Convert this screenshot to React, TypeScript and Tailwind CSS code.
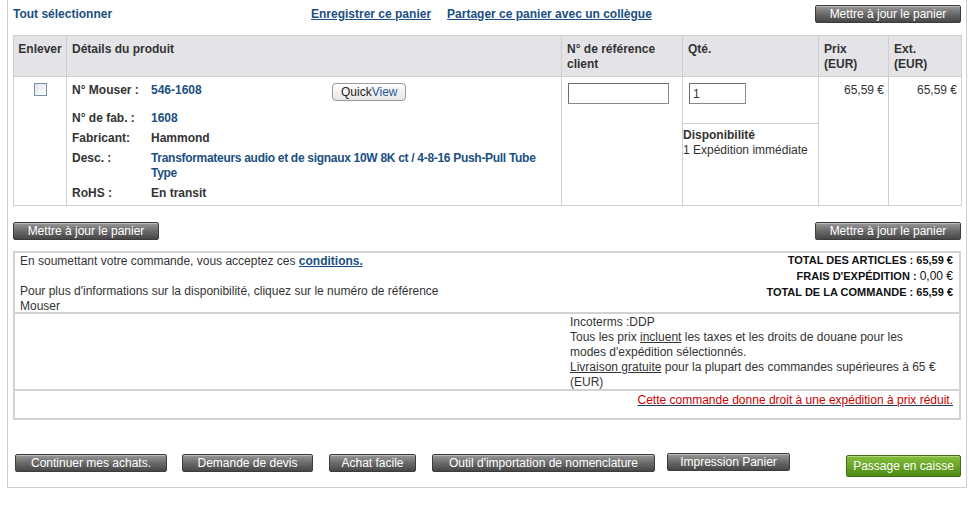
import React from 'react';

const blue = 'text-[#1b4f82]';

const GrayButton: React.FC<{ label: string; w: string; className?: string }> = ({ label, w, className = '' }) => (
    <button
        className={`${w} ${className} h-[18px] rounded-[2px] border border-[#3c3c3c] bg-gradient-to-b from-[#9a9a9a] via-[#6a6a6a] to-[#474747] text-[12px] leading-[16px] text-white shadow-[inset_0_1px_0_rgba(255,255,255,0.35)]`}
    >
        {label}
    </button>
);

const DetailRow: React.FC<{ label: string; h: string; children: React.ReactNode }> = ({ label, h, children }) => (
    <div className={`flex ${h}`}>
        <div className="w-[79px] shrink-0 font-bold text-[#333]">{label}</div>
        <div className="flex-1">{children}</div>
    </div>
);

export default function App() {
    return (
        <div className="w-[969px] h-[505px] bg-white font-['Liberation_Sans',Arial,sans-serif] text-[12px] leading-[15px] text-[#333]">
            <div className="ml-[7px] w-[960px] h-[488px] border-x border-b border-[#cfcfcf] px-[5px] pt-[5px]">
                {/* top links */}
                <div className="flex items-center h-[18px]">
                    <a className={`w-[298px] font-bold ${blue}`}>Tout sélectionner</a>
                    <a className={`font-bold underline ${blue}`}>Enregistrer ce panier</a>
                    <a className={`ml-[16px] font-bold underline ${blue}`}>Partager ce panier avec un collègue</a>
                    <GrayButton label="Mettre à jour le panier" w="w-[146px]" className="ml-auto" />
                </div>

                {/* cart table */}
                <table className="mt-[12px] w-[948px] table-fixed border-collapse">
                    <colgroup>
                        <col className="w-[53px]" />
                        <col className="w-[495px]" />
                        <col className="w-[121px]" />
                        <col className="w-[136px]" />
                        <col className="w-[70px]" />
                        <col className="w-[73px]" />
                    </colgroup>
                    <thead>
                        <tr className="h-[41px] bg-[#e4e4e8] text-left align-top font-bold">
                            <th className="border border-[#cfcfcf] px-[4px] pt-[6px] text-center">Enlever</th>
                            <th className="border border-[#cfcfcf] px-[5px] pt-[6px]">Détails du produit</th>
                            <th className="border border-[#cfcfcf] px-[5px] pt-[6px]">N° de référence<br />client</th>
                            <th className="border border-[#cfcfcf] px-[5px] pt-[6px]">Qté.</th>
                            <th className="border border-[#cfcfcf] px-[5px] pt-[6px]">Prix<br />(EUR)</th>
                            <th className="border border-[#cfcfcf] px-[5px] pt-[6px]">Ext.<br />(EUR)</th>
                        </tr>
                    </thead>
                    <tbody>
                        <tr className="h-[129px] align-top">
                            <td className="border border-[#cfcfcf] pt-[6px]">
                                <div className="mx-auto h-[13px] w-[13px] border border-[#7a8ea6] bg-gradient-to-br from-[#dfe4ea] to-white" />
                            </td>
                            <td className="border border-[#cfcfcf] pl-[5px] pr-[2px] pt-[6px]">
                                <DetailRow label="N° Mouser :" h="h-[28px]">
                                    <div className="flex">
                                        <a className={`w-[181px] font-bold ${blue}`}>546-1608</a>
                                        <span className="h-[18px] rounded-[4px] border border-[#9a9a9a] bg-gradient-to-b from-white to-[#e6e6e6] px-[8px] text-[12px] leading-[16px] text-[#222]">
                                            Quick<span className="text-[#1b5a9a]">View</span>
                                        </span>
                                    </div>
                                </DetailRow>
                                <DetailRow label="N° de fab. :" h="h-[20px]">
                                    <a className={`font-bold ${blue}`}>1608</a>
                                </DetailRow>
                                <DetailRow label="Fabricant:" h="h-[20px]">
                                    <span className="font-bold">Hammond</span>
                                </DetailRow>
                                <DetailRow label="Desc. :" h="h-[35px]">
                                    <a className={`block whitespace-nowrap tracking-[-0.3px] font-bold ${blue}`}>
                                        Transformateurs audio et de signaux 10W 8K ct / 4-8-16 Push-Pull Tube
                                        <br />
                                        Type
                                    </a>
                                </DetailRow>
                                <DetailRow label="RoHS :" h="h-[15px]">
                                    <span className="font-bold">En transit</span>
                                </DetailRow>
                            </td>
                            <td className="border border-[#cfcfcf] px-[6px] pt-[6px]">
                                <input className="h-[21px] w-[101px] border border-[#8a8a8a] border-t-[#6e6e6e] border-l-[#6e6e6e] bg-white outline-none" />
                            </td>
                            <td className="border border-[#cfcfcf] p-0">
                                <div className="h-[46px] px-[6px] pt-[6px]">
                                    <input defaultValue="1" className="h-[21px] w-[57px] border border-[#8a8a8a] border-t-[#6e6e6e] border-l-[#6e6e6e] bg-white px-[3px] text-[12px] outline-none" />
                                </div>
                                <div className="h-[82px] border-t border-[#cfcfcf] pt-[4px]">
                                    <div className="font-bold">Disponibilité</div>
                                    <div>1 Expédition immédiate</div>
                                </div>
                            </td>
                            <td className="border border-[#cfcfcf] pr-[4px] pt-[6px] text-right">65,59 €</td>
                            <td className="border border-[#cfcfcf] pr-[4px] pt-[6px] text-right">65,59 €</td>
                        </tr>
                    </tbody>
                </table>

                {/* update buttons */}
                <div className="mt-[16px] flex justify-between">
                    <GrayButton label="Mettre à jour le panier" w="w-[146px]" />
                    <GrayButton label="Mettre à jour le panier" w="w-[146px]" />
                </div>

                {/* summary */}
                <div className="mt-[11px] w-[948px] border-2 border-[#d2d2d2]">
                    <div className="flex h-[61px] border-b-2 border-[#d2d2d2] pl-[5px] pr-[6px] pt-[1px]">
                        <div className="flex-1">
                            <div>
                                En soumettant votre commande, vous acceptez ces{' '}
                                <a className={`font-bold underline ${blue}`}>conditions.</a>
                            </div>
                            <div className="mt-[15px]">
                                Pour plus d'informations sur la disponibilité, cliquez sur le numéro de référence
                                <br />
                                Mouser
                            </div>
                        </div>
                        <div className="-mt-[2px] text-right text-[11px] leading-[16px] font-bold text-[#111]">
                            <div>TOTAL DES ARTICLES : 65,59 €</div>
                            <div>
                                FRAIS D'EXPÉDITION : <span className="font-normal text-[12px]">0,00 €</span>
                            </div>
                            <div>TOTAL DE LA COMMANDE : 65,59 €</div>
                        </div>
                    </div>
                    <div className="flex h-[77px] border-b-2 border-[#d2d2d2] pt-[1px]">
                        <div className="w-[555px]" />
                        <div className="flex-1">
                            <div>Incoterms :DDP</div>
                            <div>
                                Tous les prix <span className="underline">incluent</span> les taxes et les droits de douane pour les
                                <br />
                                modes d'expédition sélectionnés.
                            </div>
                            <div>
                                <span className="underline">Livraison gratuite</span> pour la plupart des commandes supérieures à 65 €
                                <br />
                                (EUR)
                            </div>
                        </div>
                    </div>
                    <div className="h-[27px] pr-[6px] pt-[2px] text-right">
                        <a className="text-[#cc0000] underline decoration-[#1b3f63]">Cette commande donne droit à une expédition à prix réduit.</a>
                    </div>
                </div>

                {/* bottom actions */}
                <div className="mt-[34px] flex items-start pl-[2px]">
                    <GrayButton label="Continuer mes achats." w="w-[152px]" />
                    <GrayButton label="Demande de devis" w="w-[131px]" className="ml-[15px]" />
                    <GrayButton label="Achat facile" w="w-[87px]" className="ml-[16px]" />
                    <GrayButton label="Outil d'importation de nomenclature" w="w-[223px]" className="ml-[16px]" />
                    <GrayButton label="Impression Panier" w="w-[123px]" className="ml-[12px] -mt-[1px]" />
                    <button className="ml-auto mt-[1px] h-[22px] w-[115px] rounded-[2px] border border-[#3f6e12] bg-gradient-to-b from-[#86c03a] to-[#4c8a14] text-[12px] text-white shadow-[inset_0_1px_0_rgba(255,255,255,0.35)]">
                        Passage en caisse
                    </button>
                </div>
            </div>
        </div>
    );
}
